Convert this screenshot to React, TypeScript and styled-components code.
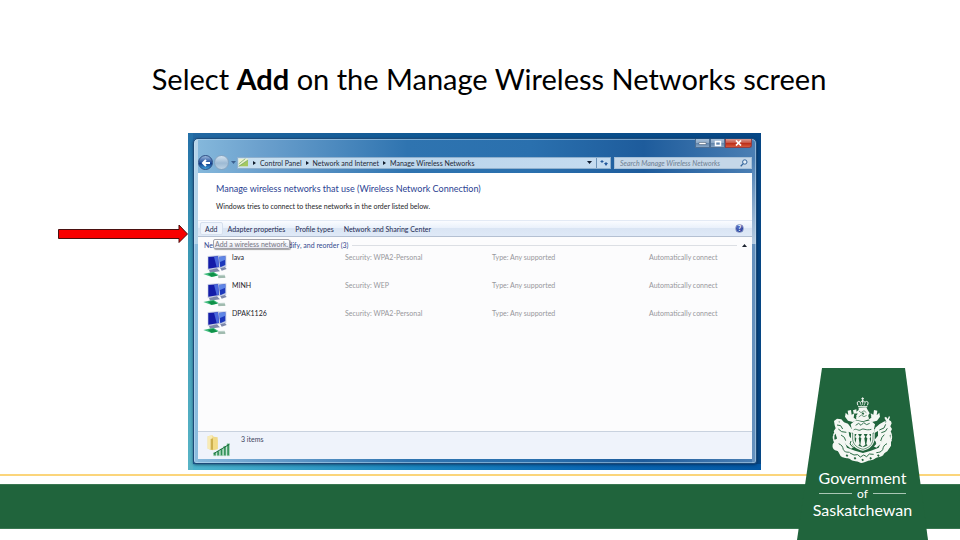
import React from "react";
import styled, { createGlobalStyle } from "styled-components";

const GlobalStyle = createGlobalStyle`
  * { box-sizing: border-box; }
  body { margin: 0; background: #fff; }
  button, input, table { font: inherit; color: inherit; }
`;

const Slide = styled.main`
  position: relative;
  display: flex;
  flex-direction: column;
  min-height: 100vh;
  overflow: hidden;
  background: #fff;
`;

const Title = styled.h1`
  margin: 0;
  padding: 60px 0 36px 18px;
  font: 400 29px/37px Lato, "Open Sans", sans-serif;
  color: #000;
  text-align: center;
  white-space: nowrap;
`;

const Stage = styled.section`
  display: flex;
  align-items: flex-start;
  padding: 0 199px 0 58px;
`;

const Arrow = styled.svg`
  flex: none;
  width: 130px;
  height: 20px;
  margin-top: 91px;
`;

const Desktop = styled.div`
  flex: 1;
  min-width: 0;
  padding: 5px 4px 6px 5px;
  background:
    linear-gradient(180deg, #2470a8 0, #3a98b4 35%, #58b4c6 100%) left / 5px 100% no-repeat,
    linear-gradient(90deg, #4cb4cc 0, #1a86c0 40%, #0a68b4 70%, #0458a4 100%) bottom / 100% 6px no-repeat,
    linear-gradient(90deg, #2268a2 0, #0c5590 50%, #064684 100%);
`;

const Window = styled.section`
  display: flex;
  flex-direction: column;
  padding: 0 4px 4px;
  border: 1px solid #1c4a78;
  border-radius: 5px 5px 3px 3px;
  background:
    linear-gradient(180deg, rgba(255, 255, 255, 0.4) 0 105px, rgba(255, 255, 255, 0.05) 105px) left / 4px 100% no-repeat,
    linear-gradient(180deg, rgba(255, 255, 255, 0) 20px, rgba(255, 255, 255, 0.6) 105px, rgba(255, 255, 255, 0.15) 105px) right / 4px 100% no-repeat,
    linear-gradient(90deg, #86b9dc 0, #6ba0cd 12%, #2f74b0 38%, #2a70ae 60%, #1e5c9c 80%, #4b7fb4 100%);
  box-shadow: inset 0 0 0 1px rgba(200, 228, 245, 0.5), 0 1px 3px rgba(0, 25, 60, 0.6);
  font: 400 7px/8px Lato, "Open Sans", sans-serif;
  color: #1e1e28;
  white-space: nowrap;
`;

const TitleBar = styled.header`
  display: flex;
  justify-content: flex-end;
  height: 16px;
`;

const Caption = styled.button<{ $close?: boolean }>`
  display: flex;
  align-items: center;
  justify-content: center;
  width: ${(p) => (p.$close ? 27 : 15)}px;
  height: 9px;
  padding: 0;
  border: 1px solid ${(p) => (p.$close ? "#8d4048" : "#4d6f94")};
  border-top: 0;
  border-radius: ${(p) => (p.$close ? "0 0 3px 0" : "0")};
  background: ${(p) =>
    p.$close
      ? "linear-gradient(#dc9a92, #c9503e 50%, #ba2a16 50%, #d65a3c)"
      : "linear-gradient(#a9c0d8, #8aa8c6 50%, #5f82a8 50%, #86a6c6)"};
`;

const NavBar = styled.nav`
  display: flex;
  align-items: center;
  height: 18px;
  padding-bottom: 3px;
`;

const RoundButton = styled.button<{ $dim?: boolean }>`
  display: flex;
  align-items: center;
  justify-content: center;
  flex: none;
  width: 15px;
  height: 15px;
  margin-right: 1px;
  padding: 0;
  border: 1px solid ${(p) => (p.$dim ? "#86a4c0" : "#2f4f85")};
  border-radius: 50%;
  background: ${(p) =>
    p.$dim
      ? "linear-gradient(#d3e3f0, #9dbad4 55%, #bcd2e4)"
      : "linear-gradient(#9bb8dc, #23509c 50%, #0f3888 55%, #3fa0d8)"};
`;

const TinyButton = styled.button`
  display: flex;
  align-items: center;
  justify-content: center;
  flex: none;
  width: 7px;
  height: 12px;
  padding: 0;
  border: 0;
  background: transparent;
`;

const AddressBox = styled.div`
  display: flex;
  align-items: center;
  flex: 1;
  min-width: 0;
  height: 12px;
  border: 1px solid #8fb0ce;
  background: linear-gradient(90deg, #c9e0f0, #bcd6ec 60%, #c6dcf0);
`;

const Crumb = styled.a`
  color: #1d2838;
  text-decoration: none;
`;

const CrumbGap = styled.svg`
  flex: none;
  width: 11px;
  height: 8px;
`;

const Spacer = styled.span`
  flex: 1;
`;

const AddressButton = styled(TinyButton)<{ $divided?: boolean }>`
  width: 14px;
  height: 10px;
  border-left: ${(p) => (p.$divided ? "1px solid #6d93b8" : "0")};
`;

const SearchBox = styled.label`
  display: flex;
  align-items: center;
  width: 138px;
  height: 12px;
  margin-left: 3px;
  padding: 0 3px 0 5px;
  border: 1px solid #a6c0d8;
  background: #c5d7e8;
`;

const SearchInput = styled.input`
  flex: 1;
  min-width: 0;
  height: 10px;
  padding: 0;
  border: 0;
  outline: 0;
  background: transparent;
  font-style: italic;
  &::placeholder { color: #6d7e92; opacity: 1; }
`;

const Client = styled.div`
  background: #fcfcfd;
`;

const Intro = styled.div`
  height: 47px;
  padding: 10px 18px 0;
  background: #fff;
`;

const Heading = styled.h2`
  margin: 0 0 7px;
  font-size: 9px;
  line-height: 12px;
  font-weight: 400;
  color: #2b3f92;
`;

const Note = styled.p`
  margin: 0;
`;

const Toolbar = styled.div`
  display: flex;
  align-items: center;
  height: 17px;
  padding: 0 8px 0 2px;
  border-top: 1px solid #e3eaf5;
  border-bottom: 1px solid #b4c0d2;
  background: linear-gradient(#fafcff, #eaf1fb 45%, #dae5f4 50%, #dfe9f7);
  color: #1e2b52;
`;

const ToolButton = styled.button<{ $hot?: boolean }>`
  height: 13px;
  padding: 0 4px;
  border: 1px solid ${(p) => (p.$hot ? "#d6e0ee" : "transparent")};
  border-radius: 2px;
  background: ${(p) => (p.$hot ? "#eef4fc" : "transparent")};
`;

const HelpButton = styled.button`
  width: 9px;
  height: 9px;
  padding: 0;
  border: 1px solid #8d9cc9;
  border-radius: 50%;
  background: radial-gradient(circle at 40% 30%, #5a74c8, #1a2f8c);
  color: #fff;
  font-weight: 700;
  line-height: 7px;
`;

const GroupRow = styled.div`
  position: relative;
  display: flex;
  align-items: center;
  gap: 4px;
  height: 14px;
  padding: 2px 4px 0 6px;
  color: #33498f;
`;

const Rule = styled.span`
  flex: 1;
  height: 1px;
  background: #dcdfe4;
`;

const Tip = styled.div`
  position: absolute;
  left: 15px;
  top: 2px;
  padding: 0 1px;
  border: 1px solid #a4a4ac;
  border-radius: 2px;
  background: linear-gradient(#fff, #e8e9f1);
  box-shadow: 1px 1px 1px rgba(0, 0, 0, 0.35);
  color: #777784;
`;

const List = styled.table`
  width: 100%;
  height: 180px;
  table-layout: fixed;
  border-collapse: collapse;
`;

const Col = styled.col<{ $w?: number }>`
  width: ${(p) => (p.$w ? `${p.$w}px` : "auto")};
`;

const Row = styled.tr`
  height: 28px;
`;

const Cell = styled.td<{ $name?: boolean }>`
  padding: 2px 0 0;
  vertical-align: top;
  color: ${(p) => (p.$name ? "#22222a" : "#97979c")};
`;

const IconCell = styled.td`
  padding: 3px 0 0 5px;
  vertical-align: top;
  line-height: 0;
`;

const Status = styled.footer`
  display: flex;
  gap: 11px;
  height: 28px;
  padding: 3px 8px;
  border-top: 1px solid #c9d2df;
  background: #eff3fb;
  color: #3d4660;
`;

const GoldLine = styled.div`
  height: 2px;
  margin-top: 4px;
  background: #fbd57b;
`;

const GreenBand = styled.div`
  height: 45px;
  margin-top: 8px;
  background: #20643c;
  border-top: 1px solid #3a7752;
  border-bottom: 1px solid #3a7752;
`;

const Emblem = styled.aside`
  position: absolute;
  right: 32px;
  bottom: 0;
  display: flex;
  flex-direction: column;
  align-items: center;
  width: 131px;
  height: 172px;
  padding-top: 29px;
  background: #20643c;
  clip-path: polygon(25px 0, 108px 0, 131px 100%, 0 100%);
  font: 400 16px/16px Lato, "Open Sans", sans-serif;
  color: #fff;
`;

const EmblemName = styled.div`
  line-height: 17px;
`;

const Crest = styled.div`
  margin-bottom: 3px;
  line-height: 0;
`;

const EmblemOf = styled.div`
  display: flex;
  align-items: center;
  gap: 5px;
  font-size: 12px;
  line-height: 15px;
`;

const Dash = styled.span`
  width: 33px;
  height: 1px;
  background: #a9c6b4;
`;

const Chevron = () => (
  <CrumbGap viewBox="0 0 11 8" aria-hidden="true">
    <path d="M4 2l3 2-3 2z" fill="#111c2c" />
  </CrumbGap>
);

const NetworkIcon = () => (
  <svg width="24" height="25" viewBox="0 0 72 75" aria-hidden="true">
    <path d="M39 5l31-1v34l-18 7z" fill="#c3cce4" />
    <path d="M46 9l21-2v26l-15 7z" fill="#1c38bc" />
    <path d="M46 9l21-2v10l-18 8z" fill="#5f86e6" />
    <path d="M52 43l14-4 5 6-15 5z" fill="#7d88aa" />
    <path d="M14 6l33-2 4 38-37 7z" fill="#c3cce2" />
    <path d="M16 9l29-2 3 32-32 5z" fill="#141ca8" />
    <path d="M33 8l12-1 3 31-7 1z" fill="#4a68dc" />
    <path d="M18 48l24-5 9 9-30 4z" fill="#7f89aa" />
    <path d="M1 60l30-7 17 11-22 5z" fill="#43bd80" />
    <path d="M14 59l18-3 11 9-18 3z" fill="#0f9148" />
    <path d="M45 63l20-1 3 9-22 2z" fill="#bad0c8" />
    <path d="M46 69h20" stroke="#86a596" strokeWidth="3" />
  </svg>
);

const SignalFolder = () => (
  <svg width="24" height="22" viewBox="0 0 72 66" aria-hidden="true">
    <path d="M5 4l14-3 4 4 12 2v36l-16 3-14-5z" fill="#efd98a" />
    <path d="M5 4l14-3v43L5 41z" fill="#f8ebb5" />
    <path d="M14 12l7-2v34l-7 0z" fill="#cdb04e" />
    <path d="M21 10l14 4v27l-14 4z" fill="#f3dc86" />
    <path d="M23 62v-9h7v9zM33 62V48h7v14zM43 62V42h7v20zM53 62V34h7v28zM63 62V26h7v36z" fill="#2e8f55" stroke="#a8d8b8" strokeWidth="2" />
    <path d="M23 56L70 28" stroke="#146b3a" strokeWidth="3" />
  </svg>
);

const AddressIcon = () => (
  <svg width="11" height="9" viewBox="0 0 33 27" aria-hidden="true">
    <path d="M2 2h28v23H2z" fill="#edf2cc" />
    <path d="M2 25L30 7v18z" fill="#a5c860" />
    <path d="M2 18L22 2M2 25L30 6" stroke="#5d9b62" strokeWidth="2" />
  </svg>
);

const CoatOfArms = () => (
  <svg width="61" height="69" viewBox="130 108 183 207" role="img" aria-label="Coat of arms">
    <g fill="none" stroke="#f4f7f3" strokeWidth="3">
      <path d="M208 133c-6-11 2-15 7-9l7-6 7 6c5-6 13-2 7 9M208 137h28M222 109v16M218 113h8" />
      <path d="M222 119v13M214 124l4 10M230 124l-4 10" strokeWidth="2" />
    </g>
    <g fill="#f4f7f3">
      <path d="M210 140l23-1 4 8 6 10-4 5 2 13-18 6-20-4-1-12 5-7-6-4 9-7z" />
      <path d="M203 145l-10 3 2 9 9 1zM193 183l-15-4-9-12 2-12 8 8-2-14 10-2 2 14 8-4-2 13 9 6zM250 183l15-4 9-12-2-12-8 8 2-14-10-2-2 14-8-4 2 13-9 6z" />
      <path d="M186 190l14-12 22 5 23-5 14 12-3 14-15 5-15 3-20-3-17-5z" />
      <path d="M136 180l9-7 13 2 8 9 12 4 10 14v14l-8-4 2 14 12 14-4 9 6 9-9 5-15-12-6-9-12 9-10 2-6-8 7-13-4-12-6-9 6-9-3-9z" />
      <path d="M307 181l-6-4 3-9-3-3-4 9-5-7-5 3 5 9-7 3-12 7-13 11-4 17 12-7v14l-11 13 6 10-8 9 8 4 14-12 3-7 11 6 12 1 6-9-6-14 3-13 4-8-5-8 4-9z" />
      <path d="M187 204h71v31c-3 18-16 31-35 34-21-4-34-15-36-33z" />
      <path d="M138 236l14-5 16 11 7 18 24 9 24 7 24-7 23-9 8-18 17-10 12 5v17l-11 17-22 14-22 9-29 7-29-7-24-9-22-14-12-17z" />
    </g>
    <path d="M189 216h3v19c2 17 14 26 31 30 17-4 28-13 30-30v-19h3" fill="none" stroke="#20643c" strokeWidth="2" />
    <path d="M198 219h49v17c-2 12-11 19-24 23-14-4-23-11-25-23z" fill="#20643c" />
    <g fill="#f4f7f3">
      <path d="M202 223c2-7 6-7 8 0l3 4-3 5 3 17-6 6-7-6 3-17-4-4zM218 223c2-7 7-7 9 0l3 4-3 5 3 19-8 7-7-7 3-19-4-4zM235 223c2-7 7-7 8 0l4 4-4 5 3 17-7 6-6-6 3-17-4-4z" />
    </g>
    <path d="M195 207c8-7 14 5 22-1s14 4 31-1M201 193l9-6 7 6 8-8 9 6 9-4" fill="none" stroke="#377554" strokeWidth="3" />
    <g fill="none" stroke="#f4f7f3" strokeLinecap="round">
      <path d="M146 246c-14 2-11 17-1 18 13 1 8 16 18 20 10 6 17-1 23 6 9 10 18 2 27 9 8 5 13 0 20-3 8-4 16 0 24-8 6-6 16-2 23-9 7-8 0-16 11-18 12-3 12-15-1-17" strokeWidth="10" />
      <path d="M139 215c-7 11-5 23 2 31M305 215c5 10 3 21-2 30" strokeWidth="5" strokeDasharray="7 4" />
    </g>
    <g fill="none" stroke="#2b6c46" strokeWidth="3">
      <path d="M145 192l11 2 6 10M149 204l10 8 14 2M157 222l10 7 4 10M291 190l-5 11-14 6M296 202l-6 9-12 4M287 221l-7 8-4 11" />
      <path d="M150 248c10 5 12 8 14 18 5 9 12 7 19 8M295 248c-9 4-11 9-13 18-5 8-11 8-19 9M184 276l12 6 11-1 8 7 10-6 9 5 8-8 13 1M194 260l-10-11 3-9M251 260l10-11-3-9" />
      <path d="M196 163l8 4M238 166l10-3M211 150l6 5 9-6 7 6M210 168l8-6 8 5 8-4" strokeWidth="2" />
    </g>
    <g fill="#20643c">
      <path d="M171 283l4-3 4 4-4 4zM195 291l4-3 4 4-4 4zM218 296l4-3 4 4-4 4zM242 291l4-3 4 4-4 4zM265 283l4-3 4 4-4 4z" />
      <path d="M150 181l4 1-3 3zM290 181l4 1-4 3zM219 157l4-3 4 4-4 4z" />
    </g>
  </svg>
);

const networks = [
  { name: "lava", security: "Security:  WPA2-Personal" },
  { name: "MINH", security: "Security:  WEP" },
  { name: "DPAK1126", security: "Security:  WPA2-Personal" },
];

export default function App() {
  return (
    <>
      <GlobalStyle />
      <Slide>
        <Title>
          Select <b>Add</b> on the Manage Wireless Networks screen
        </Title>
        <Stage>
          <Arrow viewBox="0 0 130 20" aria-hidden="true">
            <path d="M.5 5.500H121V1l8.500 9-8.500 8.500V14.500H.5z" fill="#f80000" stroke="#4a1010" />
          </Arrow>
          <Desktop>
            <Window aria-label="Manage Wireless Networks">
              <TitleBar>
                <Caption aria-label="Minimize">
                  <svg width="9" height="6" viewBox="0 0 9 6"><path d="M1 2.500h7v2H1z" fill="#fff" stroke="#44566c" strokeWidth=".5" /></svg>
                </Caption>
                <Caption aria-label="Maximize">
                  <svg width="8" height="7" viewBox="0 0 8 7"><path d="M1.500 1.500h5v4h-5z" fill="none" stroke="#fff" strokeWidth="1.500" /></svg>
                </Caption>
                <Caption $close aria-label="Close">
                  <svg width="7" height="6" viewBox="0 0 7 6"><path d="M1 .5l5 5M6 .5l-5 5" stroke="#fff" strokeWidth="1.700" /></svg>
                </Caption>
              </TitleBar>
              <NavBar aria-label="Address">
                <RoundButton aria-label="Back">
                  <svg width="10" height="8" viewBox="0 0 10 8"><path d="M9 4H2M5 1L2 4l3 3" fill="none" stroke="#fff" strokeWidth="2" /></svg>
                </RoundButton>
                <RoundButton $dim aria-label="Forward" />
                <TinyButton aria-label="Recent pages">
                  <svg width="5" height="4" viewBox="0 0 5 4"><path d="M0 0h5L2.500 3z" fill="#3c6290" /></svg>
                </TinyButton>
                <AddressBox>
                  <AddressIcon />
                  <Chevron />
                  <Crumb href="#control-panel">Control Panel</Crumb>
                  <Chevron />
                  <Crumb href="#network">Network and Internet</Crumb>
                  <Chevron />
                  <Crumb href="#wireless">Manage Wireless Networks</Crumb>
                  <Spacer />
                  <AddressButton aria-label="Previous locations">
                    <svg width="5" height="3" viewBox="0 0 5 3"><path d="M0 0h5L2.500 3z" fill="#101c30" /></svg>
                  </AddressButton>
                  <AddressButton $divided aria-label="Refresh">
                    <svg width="8" height="7" viewBox="0 0 8 7"><path d="M0 3l2-2 2 2zM4 4h4L6 7zM1.500 3h1v1h-1zM5.500 3h1v1h-1z" fill="#24599c" /></svg>
                  </AddressButton>
                </AddressBox>
                <SearchBox>
                  <SearchInput type="text" aria-label="Search" placeholder="Search Manage Wireless Networks" />
                  <svg width="8" height="8" viewBox="0 0 8 8" aria-hidden="true">
                    <circle cx="4.800" cy="3" r="2.200" fill="#e6f0f8" stroke="#35669c" />
                    <path d="M3.200 4.600L.7 7.200" stroke="#35669c" strokeWidth="1.300" />
                  </svg>
                </SearchBox>
              </NavBar>
              <Client>
                <Intro>
                  <Heading>Manage wireless networks that use (Wireless Network Connection)</Heading>
                  <Note>Windows tries to connect to these networks in the order listed below.</Note>
                </Intro>
                <Toolbar>
                  <ToolButton $hot>Add</ToolButton>
                  <ToolButton>Adapter properties</ToolButton>
                  <ToolButton>Profile types</ToolButton>
                  <ToolButton>Network and Sharing Center</ToolButton>
                  <Spacer />
                  <HelpButton aria-label="Help">?</HelpButton>
                </Toolbar>
                <GroupRow>
                  <span>Networks you can view, modify, and reorder (3)</span>
                  <Rule />
                  <TinyButton aria-label="Collapse group">
                    <svg width="5" height="3" viewBox="0 0 5 3"><path d="M0 3l2.500-3L5 3z" fill="#1d2430" /></svg>
                  </TinyButton>
                  <Tip role="tooltip">Add a wireless network.</Tip>
                </GroupRow>
                <List aria-label="Wireless networks">
                  <colgroup>
                    <Col $w={34} />
                    <Col />
                    <Col $w={147} />
                    <Col $w={157} />
                    <Col $w={103} />
                  </colgroup>
                  <tbody>
                    {networks.map((n) => (
                      <Row key={n.name}>
                        <IconCell><NetworkIcon /></IconCell>
                        <Cell $name>{n.name}</Cell>
                        <Cell>{n.security}</Cell>
                        <Cell>Type:  Any supported</Cell>
                        <Cell>Automatically connect</Cell>
                      </Row>
                    ))}
                    <tr><td colSpan={5} /></tr>
                  </tbody>
                </List>
                <Status>
                  <SignalFolder />
                  <span>3 items</span>
                </Status>
              </Client>
            </Window>
          </Desktop>
        </Stage>
        <GoldLine />
        <GreenBand />
        <Emblem>
          <Crest><CoatOfArms /></Crest>
          <EmblemName>Government</EmblemName>
          <EmblemOf><Dash />of<Dash /></EmblemOf>
          <EmblemName>Saskatchewan</EmblemName>
        </Emblem>
      </Slide>
    </>
  );
}
